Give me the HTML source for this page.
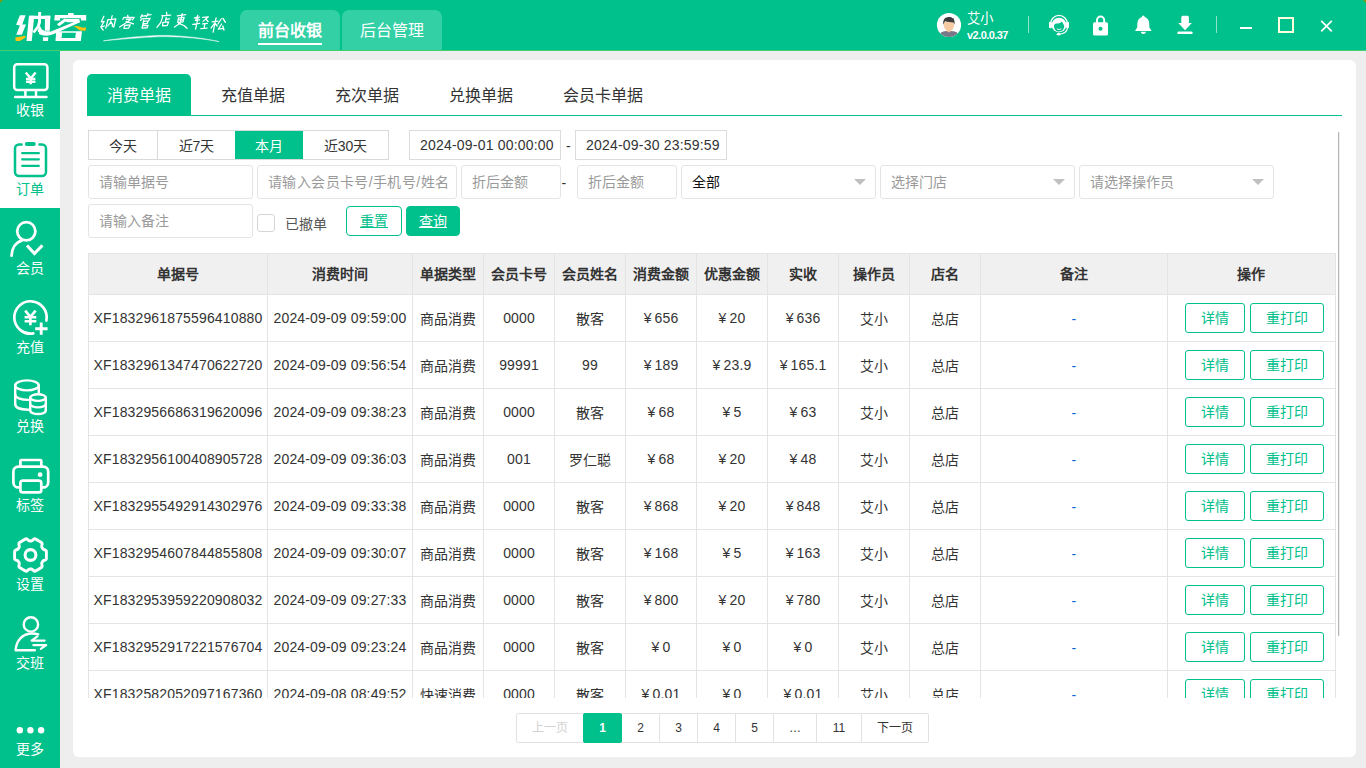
<!DOCTYPE html>
<html lang="zh-CN">
<head>
<meta charset="utf-8">
<title>纳客</title>
<style>
*{box-sizing:border-box;margin:0;padding:0}
html,body{width:1366px;height:768px;overflow:hidden;background:#eeeeee;font-family:"Liberation Sans",sans-serif;font-size:14px;color:#333}
.abs{position:absolute}
#top{position:absolute;left:0;top:0;width:1366px;height:51px;background:#00c08b;border-bottom:1px solid #40d070}
#side{position:absolute;left:0;top:51px;width:60px;height:717px;background:#00c08b}
#card{position:absolute;left:73px;top:60px;width:1283px;height:697px;background:#fff;border-radius:6px}
/* top tabs */
.ttab{position:absolute;top:10px;height:40px;width:100px;background:#33d0a5;border-radius:7px 7px 0 0;color:#fff;font-size:16px;text-align:center;line-height:41px}
.ttab.on{font-weight:bold}
.ttab.on:after{content:"";position:absolute;left:18px;top:33px;width:64px;height:2px;background:#fff}
/* side */
.sitem{position:absolute;left:0;width:60px;height:79px;color:#fff;font-size:14px;text-align:center}
.sitem span{position:absolute;left:0;width:60px;top:51px;line-height:18px}
.sitem.on{background:#fff;color:#00c08b}
.sitem svg{position:absolute;left:12px;top:12px}
.slab{position:absolute;left:0;width:60px;text-align:center;color:#fff;font-size:14px;line-height:18px}
/* sub tabs */
.stab{position:absolute;top:74px;height:41px;line-height:44px;font-size:16px;color:#333;padding:0 20px;border-radius:5px 5px 0 0;white-space:nowrap}
.stab.on{background:#00c08b;color:#fff}
#sline{position:absolute;left:87px;top:115px;width:1255px;height:1px;background:#00c08b}
/* filter */
.bgwrap{position:absolute;left:88px;top:130px;width:301px;height:30px;border:1px solid #d9d9d9;background:#fff}
.bg{position:absolute;top:131px;height:28px;line-height:30px;text-align:center;font-size:14px;color:#333;border-right:1px solid #d9d9d9}
.bg.on{background:#00c08b;color:#fff;border-right:none}
.inp{position:absolute;border:1px solid #e4e4e4;border-radius:3px;background:#fff;font-size:14px;color:#9a9a9a;padding-left:10px;white-space:nowrap;overflow:hidden}
.inp.r2{top:165px;height:34px;line-height:33px}
.inp.r3{top:204px;height:34px;line-height:33px}
.inp.d{top:130px;height:30px;line-height:29px;color:#333;border-color:#dcdcdc;border-radius:0;letter-spacing:0.2px}
.arrow{position:absolute;top:13px;right:9px;width:0;height:0;border-left:6px solid transparent;border-right:6px solid transparent;border-top:6px solid #c0c0c0}
.btn{position:absolute;top:206px;height:30px;border:1px solid #00c08b;border-radius:4px;font-size:14px;line-height:28px;text-align:center;text-decoration:underline;text-underline-offset:1px}
/* table */
#twrap{position:absolute;left:88px;top:253px;width:1249px;height:445px;overflow:hidden}
table{border-collapse:collapse;table-layout:fixed;width:1247px}
th,td{border:1px solid #e4e4e4;text-align:center;font-size:14px;color:#333;white-space:nowrap;overflow:hidden;padding:0;letter-spacing:0.15px}
th{height:41px;background:#f0f0f0;font-weight:bold;padding-bottom:3px}
.y{font-style:normal;margin-right:3px}
td{height:47px}
.ob{display:inline-block;height:30px;line-height:29px;border:1px solid #00c08b;border-radius:3px;color:#00c08b;font-size:14px;text-align:center;vertical-align:middle;letter-spacing:0}
td.op{text-align:left;padding-left:17px;font-size:0}
td.dash{color:#0b66d0;padding-top:2px}
/* pager */
.pg{position:absolute;top:713px;height:30px;border:1px solid #e2e2e2;line-height:28px;text-align:center;font-size:12px;color:#333;background:#fff}
.pg.first{color:#d2d2d2;border-radius:2px 0 0 2px}
.pg.last{border-radius:0 2px 2px 0}
.pg.on{background:#00c08b;border-color:#00c08b;color:#fff;border-radius:2px;z-index:2;font-weight:bold}
#sbar{position:absolute;left:1338px;top:132px;width:1px;height:504px;background:#b4b4b4;box-shadow:0.5px 0 0 #e0e0e0}
</style>
</head>
<body>
<div id="top"></div>
<div id="side"></div>
<div id="card"></div>


<!-- sidebar -->
<div class="abs" style="left:0;top:129px;width:60px;height:79px;background:#fff"></div>
<svg class="abs" style="left:0;top:0" width="60" height="768" viewBox="0 0 60 768" fill="none" stroke="#fff" stroke-width="2.5" stroke-linecap="round" stroke-linejoin="round">
 <!-- cashier -->
 <rect x="14.2" y="64.2" width="33.2" height="25.8" rx="3"/>
 <path d="M25.4 90.5V96.5M36 90.5V96.5"/>
 <path d="M15.2 97H46.4" stroke-width="2.6"/>
 <path d="M25.8 72.6L30.7 78.6L35.6 72.6M26 78.9H35.4M26 81.8H35.4M30.7 78.6V84.2" stroke-width="2.4" stroke-linecap="butt" stroke-linejoin="miter"/>
 <!-- order (active) -->
 <g stroke="#00c08b">
  <path d="M21.6 144.5H19a4 4 0 0 0-4 4V172a4 4 0 0 0 4 4H42a4 4 0 0 0 4-4V148.5a4 4 0 0 0-4-4H39.4"/>
  <path d="M22.2 153.2H38.8M22.2 159.4H38.8M22.2 165.8H38.8" stroke-width="2.3"/>
  <rect x="24.8" y="141.9" width="11" height="4.2" rx="2.1" fill="#00c08b" stroke="none"/>
 </g>
 <!-- member -->
 <circle cx="26.3" cy="231.3" r="9.1" stroke-width="2.8"/>
 <path d="M22 240.4C15.5 242.5 11.8 248.5 11.6 255.6" stroke-width="2.8"/>
 <path d="M27 245.4L34.4 253.6L42.4 245.4" stroke-width="3" stroke-linecap="butt" stroke-linejoin="miter"/>
 <!-- recharge -->
 <path d="M46.4 320.6A16.2 16.2 0 1 0 33.3 333.4" stroke-width="2.7"/>
 <path d="M35.2 328.7H47.6M41.2 322.6V334.8" stroke-width="2.9" stroke-linecap="butt"/>
 <path d="M25.2 310.6L30.4 316.9L35.6 310.6M24.6 317.3H36.3M24.6 321.2H36.3M30.4 316.9V325.2" stroke-width="2.6" stroke-linecap="butt" stroke-linejoin="miter"/>
 <!-- exchange -->
 <g stroke-width="2.4">
 <ellipse cx="27" cy="385.4" rx="11.8" ry="5"/>
 <path d="M15.2 385.5V404.2M38.8 385.5V392.6"/>
 <path d="M15.2 394.6C15.2 397.6 20.5 399.8 28.2 399.9"/>
 <path d="M15.2 404.2C15.2 407.4 20.5 409.6 28.4 409.7"/>
 <ellipse cx="38" cy="397.6" rx="7.8" ry="3.3"/>
 <path d="M30.2 397.6V410.4M45.8 397.6V410.4"/>
 <path d="M30.2 404C30.2 406 34 407.4 38 407.4S45.8 406 45.8 404"/>
 <path d="M30.2 410.4C30.2 412.6 34 414 38 414S45.8 412.6 45.8 410.4"/>
 </g>
 <!-- label printer -->
 <g stroke-width="2.7">
 <rect x="13.4" y="466.6" width="34.8" height="20.8" rx="5"/>
 <path d="M20.4 466.4V461a1 1 0 0 1 1-1H40.3a1 1 0 0 1 1 1V466.4"/>
 <rect x="20.4" y="480.6" width="20.9" height="11.8" rx="2.5" fill="#00c08b"/>
 <circle cx="40.1" cy="474.7" r="2.4" fill="#fff" stroke="none"/>
 </g>
 <!-- settings -->
 <g transform="translate(0,555) scale(1,1.035) translate(0,-555)"><path d="M46.4 555.0 L46.4 555.6 L46.4 556.1 L46.4 556.7 L46.4 557.2 L46.4 557.8 L46.4 558.4 L46.3 558.9 L45.9 559.4 L45.3 559.8 L44.5 560.1 L43.7 560.3 L43.2 560.6 L42.8 561.0 L42.5 561.4 L42.3 561.8 L42.0 562.2 L41.8 562.6 L41.7 563.1 L41.8 563.8 L41.9 564.6 L42.1 565.4 L42.0 566.2 L41.8 566.7 L41.4 567.1 L40.9 567.4 L40.4 567.7 L39.9 568.0 L39.4 568.2 L38.9 568.5 L38.5 568.8 L38.0 569.1 L37.5 569.3 L37.0 569.6 L36.5 569.9 L36.0 570.2 L35.5 570.4 L35.0 570.6 L34.4 570.6 L33.7 570.2 L33.1 569.7 L32.5 569.1 L31.9 568.8 L31.5 568.6 L31.0 568.6 L30.5 568.6 L30.0 568.6 L29.5 568.6 L29.1 568.8 L28.5 569.1 L27.9 569.7 L27.3 570.2 L26.6 570.6 L26.0 570.6 L25.5 570.4 L25.0 570.2 L24.5 569.9 L24.0 569.6 L23.5 569.3 L23.0 569.1 L22.5 568.8 L22.1 568.5 L21.6 568.2 L21.1 568.0 L20.6 567.7 L20.1 567.4 L19.6 567.1 L19.2 566.7 L19.0 566.2 L18.9 565.4 L19.1 564.6 L19.2 563.8 L19.3 563.1 L19.2 562.6 L19.0 562.2 L18.7 561.8 L18.5 561.4 L18.2 561.0 L17.8 560.6 L17.3 560.3 L16.5 560.1 L15.7 559.8 L15.1 559.4 L14.7 558.9 L14.6 558.4 L14.6 557.8 L14.6 557.2 L14.6 556.7 L14.6 556.1 L14.6 555.6 L14.6 555.0 L14.6 554.4 L14.6 553.9 L14.6 553.3 L14.6 552.8 L14.6 552.2 L14.6 551.6 L14.7 551.1 L15.1 550.6 L15.7 550.2 L16.5 549.9 L17.3 549.7 L17.8 549.4 L18.2 549.0 L18.5 548.6 L18.7 548.2 L19.0 547.8 L19.2 547.4 L19.3 546.9 L19.2 546.2 L19.1 545.4 L18.9 544.6 L19.0 543.8 L19.2 543.3 L19.6 542.9 L20.1 542.6 L20.6 542.3 L21.1 542.0 L21.6 541.8 L22.1 541.5 L22.5 541.2 L23.0 540.9 L23.5 540.7 L24.0 540.4 L24.5 540.1 L25.0 539.8 L25.5 539.6 L26.0 539.4 L26.6 539.4 L27.3 539.8 L27.9 540.3 L28.5 540.9 L29.1 541.2 L29.5 541.4 L30.0 541.4 L30.5 541.4 L31.0 541.4 L31.5 541.4 L31.9 541.2 L32.5 540.9 L33.1 540.3 L33.7 539.8 L34.4 539.4 L35.0 539.4 L35.5 539.6 L36.0 539.8 L36.5 540.1 L37.0 540.4 L37.5 540.7 L38.0 540.9 L38.5 541.2 L38.9 541.5 L39.4 541.8 L39.9 542.0 L40.4 542.3 L40.9 542.6 L41.4 542.9 L41.8 543.3 L42.0 543.8 L42.1 544.6 L41.9 545.4 L41.8 546.2 L41.7 546.9 L41.8 547.4 L42.0 547.8 L42.3 548.2 L42.5 548.6 L42.8 549.0 L43.2 549.4 L43.7 549.7 L44.5 549.9 L45.3 550.2 L45.9 550.6 L46.3 551.1 L46.4 551.6 L46.4 552.2 L46.4 552.8 L46.4 553.3 L46.4 553.9 L46.4 554.4Z" stroke-width="2.9"/></g>
 <circle cx="30.5" cy="555" r="5.4" stroke-width="3.1"/>
 <!-- shift -->
 <circle cx="30.9" cy="624.4" r="7.2" stroke-width="2.4"/>
 <path d="M38.2 634.4C36 633.6 33.5 633.4 31 633.5C22.5 634 16.3 640.5 15.6 650.2H34.8" stroke-width="2.4"/>
 <path d="M37.4 636.4L31.6 640.6H44.6M33.4 645.2H46.2L40.8 648.8" stroke-width="2.2"/>
 <!-- more -->
 <g fill="#fff" stroke="none"><circle cx="19.8" cy="730.2" r="3.2"/><circle cx="30.4" cy="730.2" r="3.2"/><circle cx="41.1" cy="730.2" r="3.2"/></g>
</svg>
<div class="slab" style="top:101px">收银</div>
<div class="slab" style="top:180px;color:#00c08b">订单</div>
<div class="slab" style="top:259px">会员</div>
<div class="slab" style="top:338px">充值</div>
<div class="slab" style="top:417px">兑换</div>
<div class="slab" style="top:496px">标签</div>
<div class="slab" style="top:575px">设置</div>
<div class="slab" style="top:654px">交班</div>
<div class="slab" style="top:740px">更多</div>


<!-- top bar graphics -->
<svg class="abs" style="left:0;top:0" width="1366" height="51" viewBox="0 0 1366 51">
 <!-- logo: coordinates in 15.18x zoom space of region (10,5) -->
 <g transform="translate(10,5) scale(0.06588)" fill="#fff">
  <polygon points="150,155 237,155 186,296 243,296 180,450 95,450 150,312 93,300"/>
  <polygon points="80,492 170,480 235,468 236,492 150,545 86,545" fill="#ffc20e"/>
  <polygon points="288,165 368,165 330,545 250,545"/>
  <polygon points="300,165 612,165 610,212 296,212"/>
  <polygon points="532,165 612,165 604,392 528,392"/>
  <polygon points="428,105 472,105 470,270 446,340 372,430 340,405 408,320 426,250"/>
  <path d="M452 300 C470 380 520 410 600 395 L604 392 L600 440 C520 470 450 440 420 400 Z"/>
  <polygon points="500,488 582,488 576,545 500,545"/>
  <path d="M440 405 C520 440 580 420 640 395 L1040 232 L1062 262 L700 425 C600 470 520 480 440 440 Z"/>
  <rect x="880" y="122" width="86" height="40"/>
  <polygon points="680,150 1156,150 1156,236 1076,236 1076,202 760,202 760,236 672,236"/>
  <polygon points="828,206 872,232 746,322 712,292"/>
  <polygon points="820,214 1052,214 1062,262 1000,262 860,262"/>
  <polygon points="965,318 1040,322 1110,345 1156,336 1146,392 1060,386 1010,350" fill="#ffc20e"/>
  <path fill-rule="evenodd" d="M702 398 H1092 L1076 545 H690 Z M792 422 L782 500 H990 L1000 422 Z"/>
 </g>
 <!-- slogan: 9.757x zoom space of region (95,5) -->
 <g transform="translate(98,5) scale(0.10249) skewX(-9)" fill="none" stroke="#fff" stroke-width="12.5" stroke-linecap="round" stroke-linejoin="round">
  <!-- 纳 -->
  <path d="M75 110 L58 165 L85 160 L62 215 L95 205 M70 225 L90 245 M120 140 L112 225 M120 145 L195 135 L188 215 L170 205 M155 105 L150 170 L128 205 M152 165 L175 195"/>
  <!-- 客 -->
  <path d="M305 100 L312 118 M265 140 L272 120 L372 122 L360 145 M300 140 L345 138 L285 185 L245 215 M300 160 L375 185 M290 200 L345 195 L335 225 L290 228 Z"/>
  <!-- 管 -->
  <path d="M445 95 L435 125 M450 108 L480 105 M500 85 L490 115 M500 98 L532 95 M440 150 L448 135 L530 130 L520 150 M470 150 L465 225 M470 160 L515 155 L510 180 L470 185 M470 200 L520 198 L515 222 L468 225"/>
  <!-- 店 -->
  <path d="M680 72 L685 92 M640 105 L725 98 M650 105 L640 170 L610 218 M685 120 L683 160 M685 140 L720 136 M660 170 L715 165 L708 200 L662 204 Z"/>
  <!-- 更 -->
  <path d="M790 105 L870 95 M805 125 L860 120 L855 165 L805 170 Z M805 145 L858 142 M835 85 L832 175 L780 215 M815 180 L870 200 L905 228"/>
  <!-- 轻 -->
  <path d="M960 125 L1010 118 M990 100 L975 150 L1015 145 M995 130 L990 235 M955 190 L1020 180 M1040 120 L1095 115 L1050 160 M1070 135 L1100 160 M1050 185 L1095 180 M1072 185 L1070 225 M1040 230 L1100 225"/>
  <!-- 松 -->
  <path d="M1140 165 L1195 158 M1172 125 L1165 265 M1168 175 L1138 225 M1172 180 L1195 205 M1225 135 L1200 185 M1240 130 L1270 170 M1235 185 L1212 235 L1262 228 M1250 205 L1268 245"/>
 </g>
 <path d="M103.4 40.8 C125 37.5 150 35.2 165 35.4 C185 35.8 203 38 219 41.6 C203 38.6 185 36.8 165 36.6 C150 36.6 125 38.9 103.4 40.8Z" fill="#fff" stroke="#fff" stroke-width="0.5" stroke-linejoin="round"/>
 <!-- avatar -->
 <defs><clipPath id="avc"><circle cx="949" cy="25" r="12"/></clipPath></defs>
 <circle cx="949" cy="25" r="12.1" fill="#fff"/>
 <g clip-path="url(#avc)">
  <path d="M940 38 V34.5 C940 32.5 943 31.2 946.5 31 L951.5 31 C955 31.2 958 32.5 958 34.5 V38Z" fill="#787889"/>
  <path d="M946.8 29 H951 V31.2 L948.9 32.6 L946.8 31.2Z" fill="#f0bf95"/>
  <ellipse cx="948.9" cy="25.2" rx="5.2" ry="5.6" fill="#f6cba3"/>
  <path d="M943.4 24.8 C942.6 20.5 944.5 17.2 948.6 17.1 C950.5 17 951.8 17.6 952.6 18.3 L954 18.4 L953.8 19.6 C954.8 21 954.8 23 954.4 24.8 L953.6 22.4 C951 22.4 947.5 22 945.2 21 C944.4 22 943.8 23.2 943.4 24.8Z" fill="#3b3b3d"/>
 </g>
 <path d="M0 0H4.5A4.5 4.5 0 0 0 0 4.5Z" fill="#7f9c05"/><path d="M1366 0H1361.5A4.5 4.5 0 0 1 1366 4.5Z" fill="#7f9c05"/>
 <!-- dividers -->
 <rect x="1028" y="16" width="1" height="17" fill="#fff" opacity="0.55"/>
 <rect x="1216" y="16" width="1" height="17" fill="#fff" opacity="0.55"/>
 <!-- headset -->
 <g>
  <path d="M1050.4 24 A8.65 9.7 0 0 1 1067.6 24" fill="none" stroke="#fff" stroke-width="1.3"/>
  <rect x="1049" y="21.8" width="3" height="6.4" rx="1.2" fill="#fff"/>
  <rect x="1066" y="21.8" width="3" height="6.4" rx="1.2" fill="#fff"/>
  <circle cx="1059" cy="25" r="7.3" fill="#fff"/>
  <path d="M1054 26.2 C1054 24.6 1055 23.8 1056.6 23.6 C1059 23.4 1061 22.6 1062 21.4 C1062.6 23 1063.6 24.4 1064.2 25.6 C1064.4 28.8 1062.4 31.6 1059.2 31.6 C1056 31.6 1054 29.2 1054 26.2Z" fill="#00c08b"/>
  <path d="M1057.2 29 Q1059.2 30.6 1061.2 29" fill="none" stroke="#fff" stroke-width="0.9" stroke-linecap="round"/>
  <path d="M1067.6 27.6 C1067 31.4 1063.6 33.8 1059.6 34.2" fill="none" stroke="#fff" stroke-width="1.1"/>
  <ellipse cx="1058.6" cy="34.2" rx="1.9" ry="1.4" fill="#fff"/>
 </g>
 <!-- lock -->
 <path d="M1097 23 V20.2 A3.6 3.6 0 0 1 1104.2 20.2 V23" fill="none" stroke="#fff" stroke-width="2"/>
 <rect x="1093" y="22.3" width="15" height="13.2" rx="1.6" fill="#fff"/>
 <circle cx="1100.5" cy="28.7" r="2" fill="#00c08b"/>
 <!-- bell -->
 <path d="M1143.3 15.4 C1144.2 15.4 1144.6 16.2 1144.7 16.9 C1147.4 17.8 1149 20.2 1149.2 23 L1149.4 27.6 L1151.2 30.2 V30.9 H1135.3 V30.2 L1137.2 27.6 L1137.4 23 C1137.6 20.2 1139.2 17.8 1141.9 16.9 C1142 16.2 1142.4 15.4 1143.3 15.4Z" fill="#fff"/>
 <path d="M1140.9 31.8 H1145.8 C1145.8 33.2 1144.8 34 1143.35 34 C1141.9 34 1140.9 33.2 1140.9 31.8Z" fill="#fff"/>
 <!-- download -->
 <path d="M1182.8 15.8 H1187.4 A1.5 1.5 0 0 1 1188.9 17.3 V23 H1191.8 L1185.1 30.3 L1178.3 23 H1181.3 V17.3 A1.5 1.5 0 0 1 1182.8 15.8Z" fill="#fff"/>
 <rect x="1177.4" y="31.4" width="15.2" height="2.7" rx="1.2" fill="#fff"/>
 <!-- window controls -->
 <rect x="1240" y="27" width="12" height="2" fill="#fff"/>
 <rect x="1279" y="18" width="14" height="14" fill="none" stroke="#ffffe0" stroke-width="2"/>
 <path d="M1321.2 20.8 L1331.8 31.4 M1331.8 20.8 L1321.2 31.4" stroke="#fff" stroke-width="1.7" fill="none"/>
</svg>
<div class="abs" style="left:967px;top:9.5px;font-size:13.5px;line-height:18px;color:#fff">艾小</div>
<div class="abs" style="left:967px;top:28px;font-size:11px;line-height:14px;color:#fff;font-weight:bold;letter-spacing:-0.55px">v2.0.0.37</div>

<!-- top tabs -->
<div class="ttab on" style="left:240px">前台收银</div>
<div class="ttab" style="left:342px">后台管理</div>

<!-- sub tabs -->
<div class="stab on" style="left:87px">消费单据</div>
<div class="stab" style="left:201px">充值单据</div>
<div class="stab" style="left:315px">充次单据</div>
<div class="stab" style="left:429px">兑换单据</div>
<div class="stab" style="left:543px">会员卡单据</div>
<div id="sline"></div>

<!-- filter row 1 -->
<div class="bgwrap"></div>
<div class="bg" style="left:89px;width:69px">今天</div>
<div class="bg" style="left:158px;width:77px;border-right:none">近7天</div>
<div class="bg on" style="left:235px;width:68px">本月</div>
<div class="bg" style="left:303px;width:85px;border-right:none">近30天</div>
<div class="inp d" style="left:409px;width:152px">2024-09-01 00:00:00</div>
<div class="abs" style="left:566px;top:138px;font-size:14px">-</div>
<div class="inp d" style="left:575px;width:152px">2024-09-30 23:59:59</div>

<!-- filter row 2 -->
<div class="inp r2" style="left:88px;width:165px">请输单据号</div>
<div class="inp r2" style="left:257px;width:200px;letter-spacing:0.4px">请输入会员卡号/手机号/姓名</div>
<div class="inp r2" style="left:461px;width:100px">折后金额</div>
<div class="abs" style="left:561.5px;top:175px;font-size:14px">-</div>
<div class="inp r2" style="left:577px;width:100px">折后金额</div>
<div class="inp r2" style="left:681px;width:195px;color:#111">全部<i class="arrow"></i></div>
<div class="inp r2" style="left:880px;width:195px">选择门店<i class="arrow"></i></div>
<div class="inp r2" style="left:1079px;width:195px">请选择操作员<i class="arrow"></i></div>

<!-- filter row 3 -->
<div class="inp r3" style="left:88px;width:165px">请输入备注</div>
<div class="abs" style="left:257px;top:214px;width:18px;height:18px;border:1px solid #d6d6d6;border-radius:3px;background:#fff"></div>
<div class="abs" style="left:285px;top:214px;font-size:14px;line-height:20px;color:#555">已撤单</div>
<div class="btn" style="left:346px;width:56px;color:#00c08b;background:#fff">重置</div>
<div class="btn" style="left:406px;width:54px;color:#fff;background:#00c08b">查询</div>

<!-- table -->
<div id="twrap">
<table>
<colgroup><col style="width:179px"><col style="width:145px"><col style="width:71px"><col style="width:71px"><col style="width:71px"><col style="width:71px"><col style="width:71px"><col style="width:71px"><col style="width:71px"><col style="width:71px"><col style="width:187px"><col style="width:168px"></colgroup>
<tr><th>单据号</th><th>消费时间</th><th>单据类型</th><th>会员卡号</th><th>会员姓名</th><th>消费金额</th><th>优惠金额</th><th>实收</th><th>操作员</th><th>店名</th><th>备注</th><th>操作</th></tr>
<tr><td>XF1832961875596410880</td><td>2024-09-09 09:59:00</td><td>商品消费</td><td>0000</td><td>散客</td><td><i class="y">¥</i>656</td><td><i class="y">¥</i>20</td><td><i class="y">¥</i>636</td><td>艾小</td><td>总店</td><td class="dash">-</td><td class="op"><span class="ob" style="width:60px;margin-right:5px">详情</span><span class="ob" style="width:74px">重打印</span></td></tr>
<tr><td>XF1832961347470622720</td><td>2024-09-09 09:56:54</td><td>商品消费</td><td>99991</td><td>99</td><td><i class="y">¥</i>189</td><td><i class="y">¥</i>23.9</td><td><i class="y">¥</i>165.1</td><td>艾小</td><td>总店</td><td class="dash">-</td><td class="op"><span class="ob" style="width:60px;margin-right:5px">详情</span><span class="ob" style="width:74px">重打印</span></td></tr>
<tr><td>XF1832956686319620096</td><td>2024-09-09 09:38:23</td><td>商品消费</td><td>0000</td><td>散客</td><td><i class="y">¥</i>68</td><td><i class="y">¥</i>5</td><td><i class="y">¥</i>63</td><td>艾小</td><td>总店</td><td class="dash">-</td><td class="op"><span class="ob" style="width:60px;margin-right:5px">详情</span><span class="ob" style="width:74px">重打印</span></td></tr>
<tr><td>XF1832956100408905728</td><td>2024-09-09 09:36:03</td><td>商品消费</td><td>001</td><td>罗仁聪</td><td><i class="y">¥</i>68</td><td><i class="y">¥</i>20</td><td><i class="y">¥</i>48</td><td>艾小</td><td>总店</td><td class="dash">-</td><td class="op"><span class="ob" style="width:60px;margin-right:5px">详情</span><span class="ob" style="width:74px">重打印</span></td></tr>
<tr><td>XF1832955492914302976</td><td>2024-09-09 09:33:38</td><td>商品消费</td><td>0000</td><td>散客</td><td><i class="y">¥</i>868</td><td><i class="y">¥</i>20</td><td><i class="y">¥</i>848</td><td>艾小</td><td>总店</td><td class="dash">-</td><td class="op"><span class="ob" style="width:60px;margin-right:5px">详情</span><span class="ob" style="width:74px">重打印</span></td></tr>
<tr><td>XF1832954607844855808</td><td>2024-09-09 09:30:07</td><td>商品消费</td><td>0000</td><td>散客</td><td><i class="y">¥</i>168</td><td><i class="y">¥</i>5</td><td><i class="y">¥</i>163</td><td>艾小</td><td>总店</td><td class="dash">-</td><td class="op"><span class="ob" style="width:60px;margin-right:5px">详情</span><span class="ob" style="width:74px">重打印</span></td></tr>
<tr><td>XF1832953959220908032</td><td>2024-09-09 09:27:33</td><td>商品消费</td><td>0000</td><td>散客</td><td><i class="y">¥</i>800</td><td><i class="y">¥</i>20</td><td><i class="y">¥</i>780</td><td>艾小</td><td>总店</td><td class="dash">-</td><td class="op"><span class="ob" style="width:60px;margin-right:5px">详情</span><span class="ob" style="width:74px">重打印</span></td></tr>
<tr><td>XF1832952917221576704</td><td>2024-09-09 09:23:24</td><td>商品消费</td><td>0000</td><td>散客</td><td><i class="y">¥</i>0</td><td><i class="y">¥</i>0</td><td><i class="y">¥</i>0</td><td>艾小</td><td>总店</td><td class="dash">-</td><td class="op"><span class="ob" style="width:60px;margin-right:5px">详情</span><span class="ob" style="width:74px">重打印</span></td></tr>
<tr><td>XF1832582052097167360</td><td>2024-09-08 08:49:52</td><td>快速消费</td><td>0000</td><td>散客</td><td><i class="y">¥</i>0.01</td><td><i class="y">¥</i>0</td><td><i class="y">¥</i>0.01</td><td>艾小</td><td>总店</td><td class="dash">-</td><td class="op"><span class="ob" style="width:60px;margin-right:5px">详情</span><span class="ob" style="width:74px">重打印</span></td></tr>
</table>
</div>
<div id="sbar"></div>

<!-- pager -->
<div class="pg first" style="left:516px;width:68px">上一页</div>
<div class="pg on" style="left:583px;width:39px">1</div>
<div class="pg " style="left:621px;width:39px">2</div>
<div class="pg " style="left:659px;width:39px">3</div>
<div class="pg " style="left:697px;width:39px">4</div>
<div class="pg " style="left:735px;width:39px">5</div>
<div class="pg " style="left:773px;width:44px">…</div>
<div class="pg " style="left:816px;width:46px">11</div>
<div class="pg last" style="left:861px;width:68px">下一页</div>

</body>
</html>
